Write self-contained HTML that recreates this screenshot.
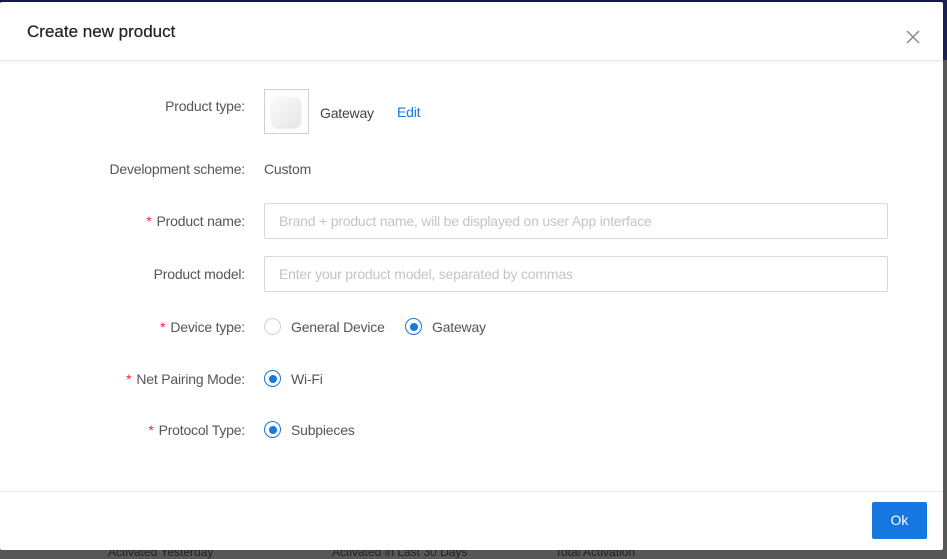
<!DOCTYPE html>
<html><head><meta charset="utf-8"><style>
*{box-sizing:border-box;margin:0;padding:0}
body{width:947px;height:554px;overflow:hidden;background:#575757;font-family:"Liberation Sans",sans-serif;position:relative}
.top{position:absolute;left:0;top:0;width:947px;height:3px;background:#141a45}
.rstrip{position:absolute;left:943px;top:0;width:4px;height:60px;background:#1c2150}
.modal{position:absolute;left:0;top:2px;width:943px;height:548px;background:#fff;border-radius:2px}
.hdr{height:59px;border-bottom:1px solid #e8e8e8;position:relative;box-shadow:0 1px 3px rgba(0,0,0,.05)}
.hdr h1{position:absolute;left:27px;top:20px;font-size:17px;font-weight:normal;color:#222;-webkit-text-stroke:0.2px #222}
.x{position:absolute;left:906px;top:28px}
.lbl{position:absolute;right:698px;font-size:14px;color:#555;white-space:nowrap;letter-spacing:-0.2px}
.lbl b{color:#f5222d;font-weight:normal;margin-right:5px}
.v{position:absolute;font-size:14px;color:#555;white-space:nowrap;letter-spacing:-0.2px}
.inp{position:absolute;left:264px;width:624px;height:36px;border:1px solid #d9d9d9;border-radius:2px;font-size:14px;color:#c4c4c4;padding:9px 0 0 14px;letter-spacing:-0.2px}
.r{position:absolute;width:17px;height:17px;border:1px solid #d0d0d0;border-radius:50%}
.r.on{border-color:#1677e0}
.r.on::after{content:"";position:absolute;left:3.5px;top:3.5px;width:8px;height:8px;border-radius:50%;background:#1677e0}
.foot{position:absolute;left:0;top:489px;width:943px;border-top:1px solid #e8e8e8}
.ok{position:absolute;left:872px;width:55px;height:37px;background:#1677e0;color:#fff;font-size:14px;text-align:center;line-height:37px;border-radius:2px}
.bt{position:absolute;top:545px;font-size:12px;color:#222}
</style></head><body>
<div class="top"></div><div class="rstrip"></div>
<div class="bt" style="left:108px">Activated Yesterday</div>
<div class="bt" style="left:332px">Activated in Last 30 Days</div>
<div class="bt" style="left:555px">Total Activation</div>
<div class="modal">
<div class="hdr"><h1>Create new product</h1>
<svg class="x" width="14" height="14" viewBox="0 0 14 14"><path d="M1 1L13 13M13 1L1 13" stroke="#888" stroke-width="1.5"/></svg></div>
<div class="lbl" style="top:96px">Product type:</div>
<div style="position:absolute;left:264px;top:87px;width:45px;height:45px;border:1px solid #d0d0d0"><div style="position:absolute;left:7px;top:7px;width:29px;height:30px;border-radius:6px;background:linear-gradient(135deg,#fafafa,#e6e6e6);box-shadow:0 1px 2px rgba(0,0,0,.15)"></div></div>
<div class="v" style="left:320px;top:103px;color:#444">Gateway</div>
<div class="v" style="left:397px;top:102px;color:#1677e0">Edit</div>
<div class="lbl" style="top:159px">Development scheme:</div>
<div class="v" style="left:264px;top:159px">Custom</div>
<div class="lbl" style="top:211px"><b>*</b>Product name:</div>
<div class="inp" style="top:201px">Brand + product name, will be displayed on user App interface</div>
<div class="lbl" style="top:264px">Product model:</div>
<div class="inp" style="top:254px">Enter your product model, separated by commas</div>
<div class="lbl" style="top:317px"><b>*</b>Device type:</div>
<div class="r" style="left:264px;top:316px"></div><div class="v" style="left:291px;top:317px">General Device</div>
<div class="r on" style="left:405px;top:316px"></div><div class="v" style="left:432px;top:317px">Gateway</div>
<div class="lbl" style="top:369px"><b>*</b>Net Pairing Mode:</div>
<div class="r on" style="left:264px;top:368px"></div><div class="v" style="left:291px;top:369px">Wi-Fi</div>
<div class="lbl" style="top:420px"><b>*</b>Protocol Type:</div>
<div class="r on" style="left:264px;top:419px"></div><div class="v" style="left:291px;top:420px">Subpieces</div>
<div class="foot"></div>
<div class="ok" style="top:500px">Ok</div>
</div>
</body></html>
